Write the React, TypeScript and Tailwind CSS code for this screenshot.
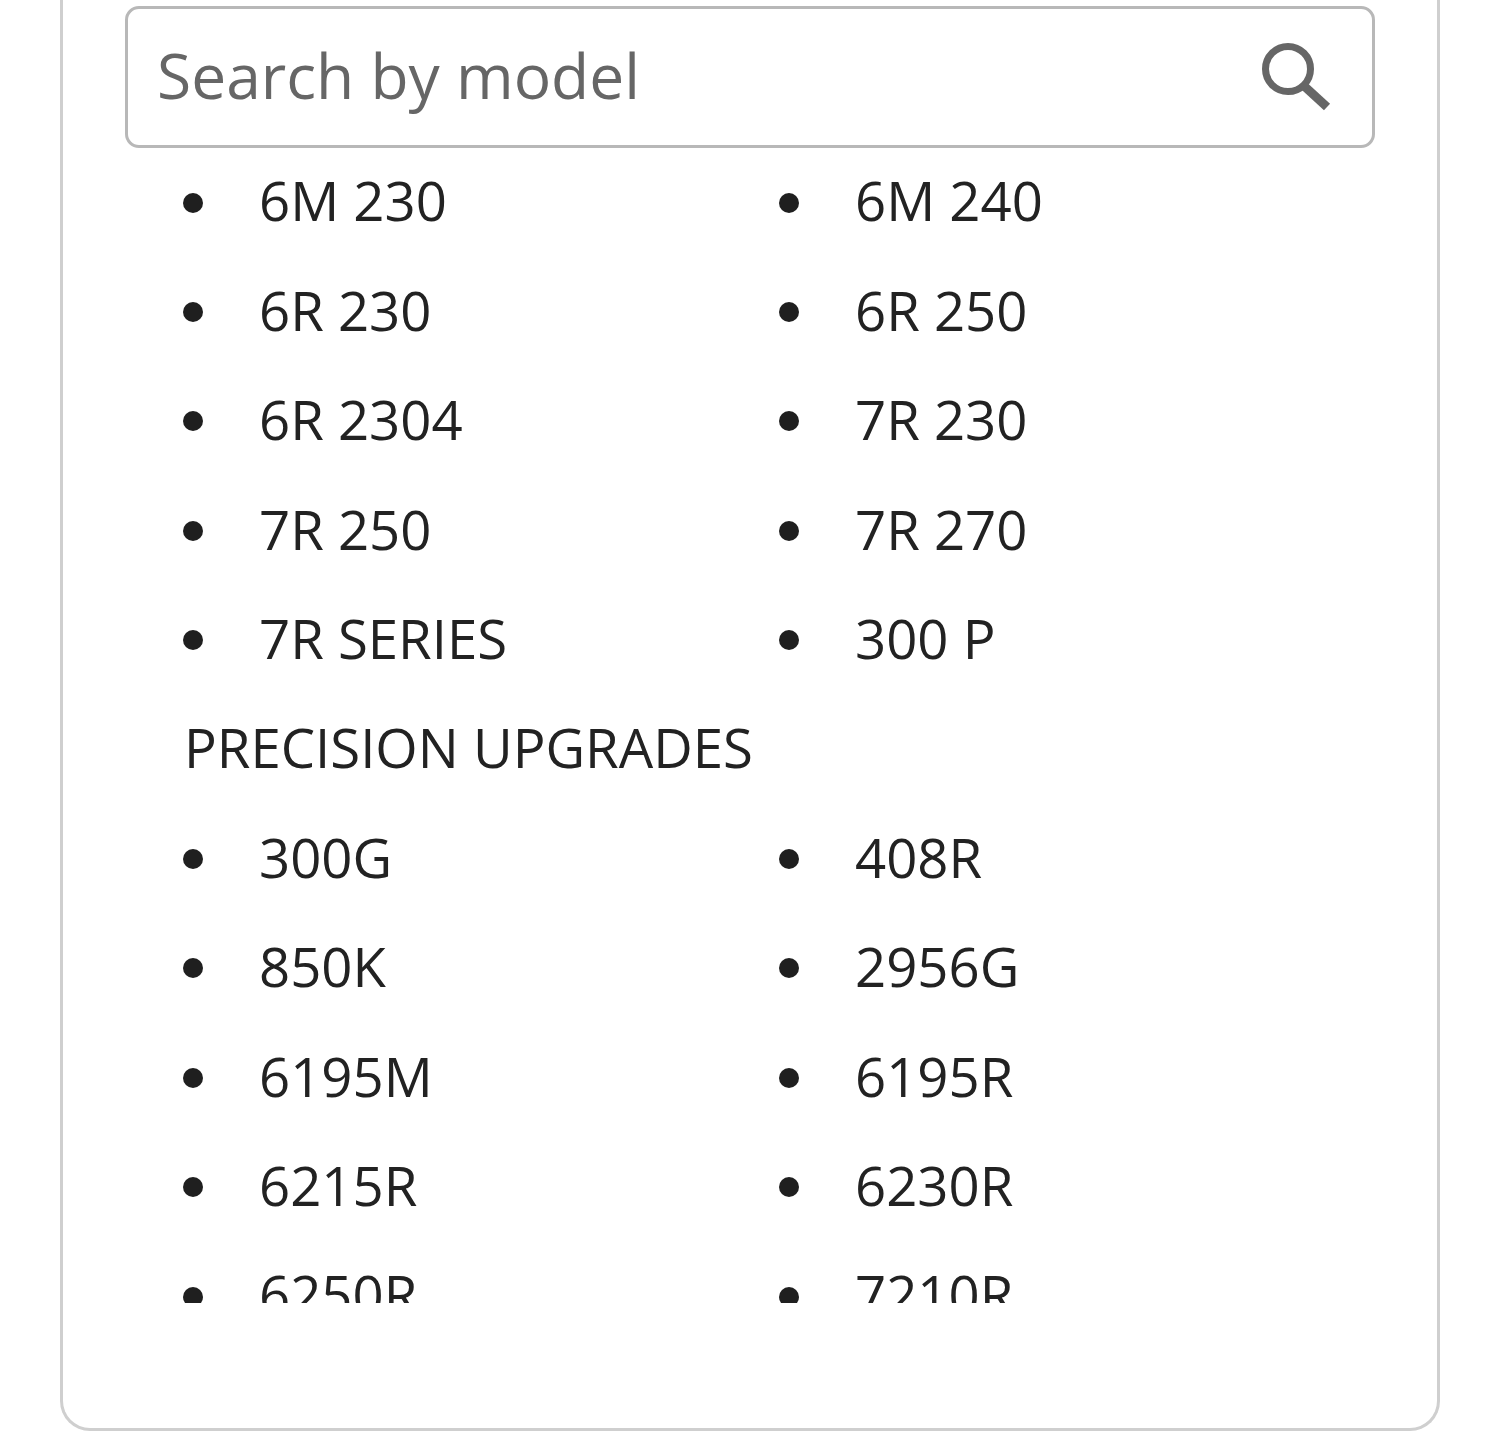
import { Fragment } from 'react'

const TOP_MODELS = ['6M 230', '6M 240', '6R 230', '6R 250', '6R 2304', '7R 230', '7R 250', '7R 270', '7R SERIES', '300 P']
const UPGRADE_MODELS = ['300G', '408R', '850K', '2956G', '6195M', '6195R', '6215R', '6230R', '6250R', '7210R']

function ModelRow({ name }: { name: string }) {
    return (
        <li className="flex items-center h-[109.4px]">
            <span className="w-5 h-5 rounded-full bg-[#1f1f1f] ml-[58px] shrink-0" />
            <span className="ml-[56px] pb-1">{name}</span>
        </li>
    )
}

function SearchIcon() {
    return (
        <svg width="72" height="72" viewBox="0 0 72 72" fill="none" stroke="#666666" strokeWidth="7">
            <circle cx="28" cy="28" r="22.5" />
            <path d="M43 44 L67 66" strokeWidth="9" />
        </svg>
    )
}

export default function App() {
    return (
        <div className="h-[1453px] bg-white overflow-hidden font-['Open_Sans',sans-serif]">
            {/* Card, its top is cut off by the page */}
            <div className="ml-[60px] w-[1380px] h-[1431px] border-x-[3px] border-b-[3px] border-[#cfcfcf] rounded-b-[30px] px-[62px] pt-[6px]">
                {/* Search */}
                <div className="flex items-center justify-between h-[142px] border-[3px] border-[#b8b8b8] rounded-[14px] pl-[29px] pr-[40px]">
                    <input
                        placeholder="Search by model"
                        className="flex-1 pb-1 text-[62.3px] text-[#666] placeholder:text-[#666] outline-none bg-transparent"
                    />
                    <SearchIcon />
                </div>

                {/* Model list */}
                <div className="h-[1155px] overflow-hidden text-[54.5px] text-[#222] leading-none">
                    {[TOP_MODELS, UPGRADE_MODELS].map((models, i) => (
                        <Fragment key={i}>
                            {i === 1 && (
                                <div className="flex items-center h-[109.4px] pl-[59px] pb-1 whitespace-nowrap">PRECISION UPGRADES</div>
                            )}
                            <ul className="grid grid-cols-[596px_1fr]">
                                {models.map(name => (
                                    <ModelRow key={name} name={name} />
                                ))}
                            </ul>
                        </Fragment>
                    ))}
                </div>
            </div>
        </div>
    )
}
